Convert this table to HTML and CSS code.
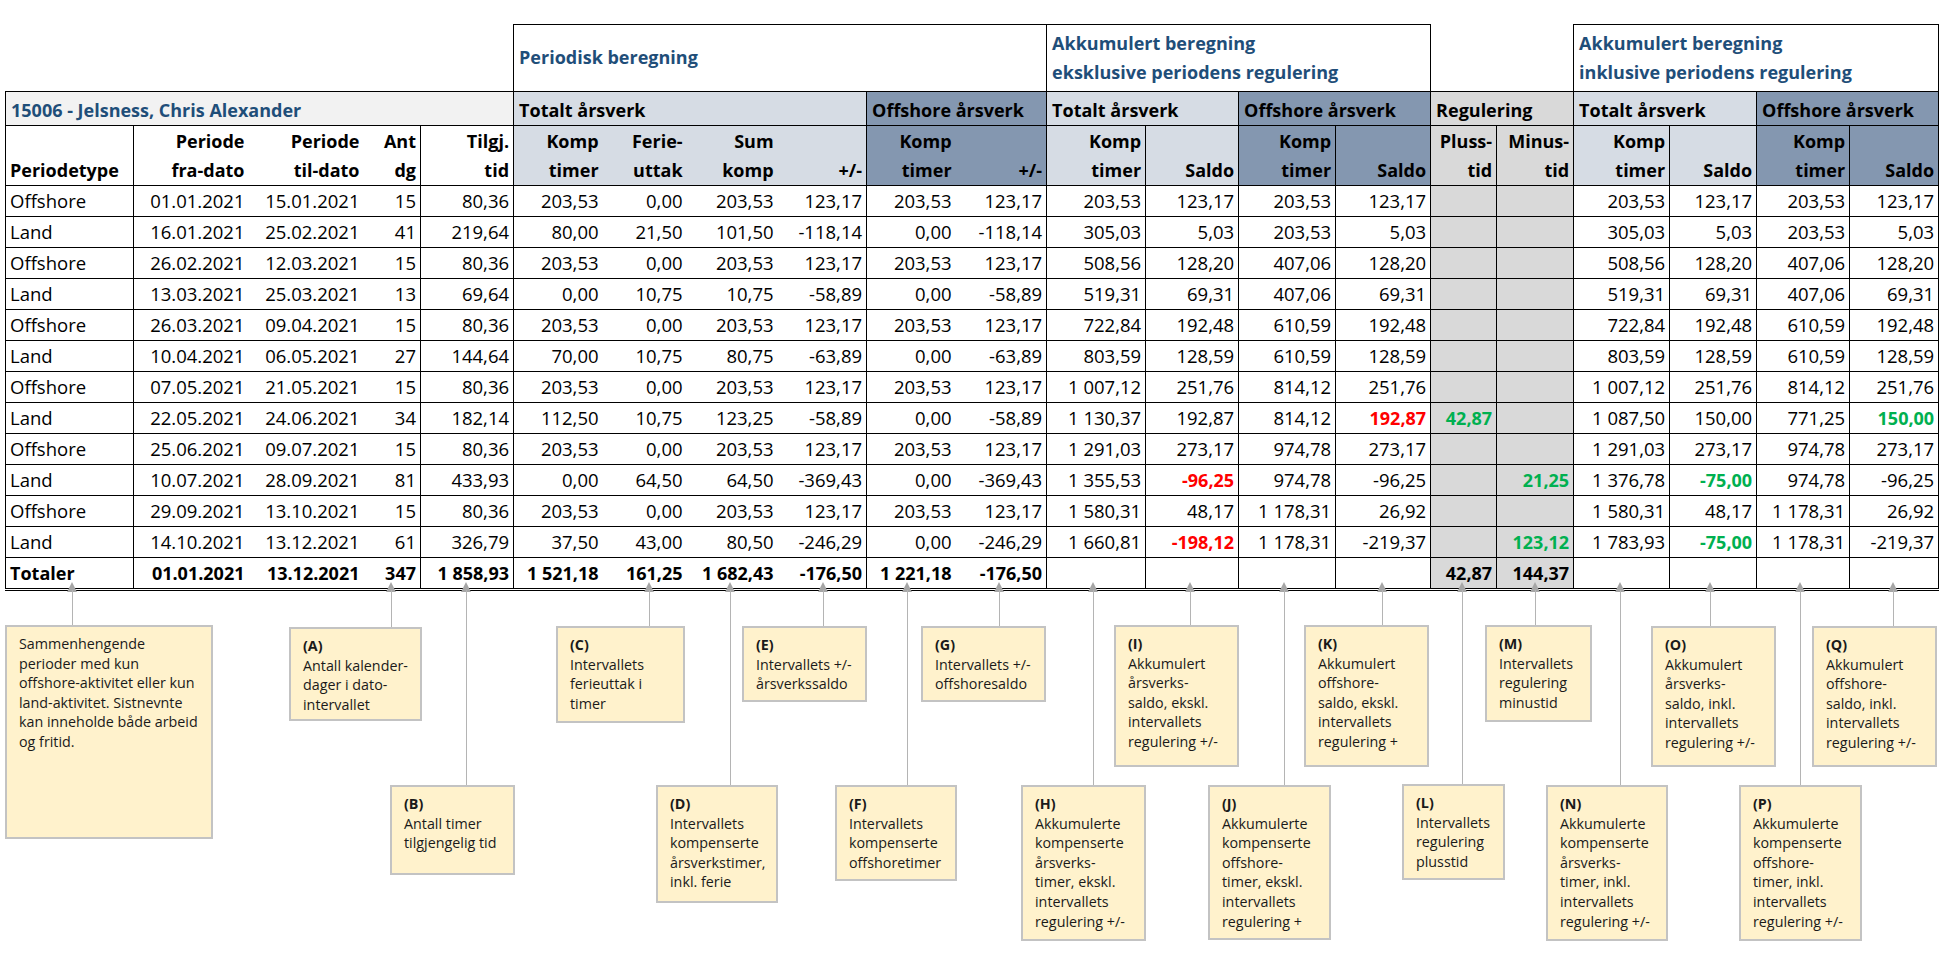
FILE: index.html
```html
<!DOCTYPE html>
<html lang="no">
<head>
<meta charset="utf-8">
<title>Kompensasjonsberegning</title>
<link rel="stylesheet" href="styles.css">
</head>
<body>
<div class="page">
<table class="sheet">
<colgroup>
<col class="w128"><col class="w115"><col class="w115"><col class="w57"><col class="w93">
<col class="w89"><col class="w84"><col class="w91"><col class="w89">
<col class="w89"><col class="w91">
<col class="w99"><col class="w93"><col class="w97"><col class="w95">
<col class="w66"><col class="w77">
<col class="w96"><col class="w87"><col class="w93"><col class="w89">
</colgroup>
<tr class="trow">
<td colspan="5" class="blank"></td>
<td colspan="6" class="title">Periodisk beregning</td>
<td colspan="4" class="title">Akkumulert beregning<br>eksklusive periodens regulering</td>
<td colspan="2" class="blank"></td>
<td colspan="4" class="title">Akkumulert beregning<br>inklusive periodens regulering</td>
</tr>
<tr class="nrow">
<td colspan="5" class="name">15006 - Jelsness, Chris Alexander</td>
<td colspan="4" class="gt">Totalt årsverk</td>
<td colspan="2" class="go">Offshore årsverk</td>
<td colspan="2" class="gt">Totalt årsverk</td>
<td colspan="2" class="go">Offshore årsverk</td>
<td colspan="2" class="gr">Regulering</td>
<td colspan="2" class="gt">Totalt årsverk</td>
<td colspan="2" class="go">Offshore årsverk</td>
</tr>
<tr class="hrow">
<td>Periodetype</td><td>Periode<br>fra-dato</td><td>Periode<br>til-dato</td><td>Ant<br>dg</td><td>Tilgj.<br>tid</td>
<td class="gt">Komp<br>timer</td><td class="gt">Ferie-<br>uttak</td><td class="gt">Sum<br>komp</td><td class="gt">+/-</td>
<td class="go">Komp<br>timer</td><td class="go">+/-</td>
<td class="gt">Komp<br>timer</td><td class="gt">Saldo</td><td class="go">Komp<br>timer</td><td class="go">Saldo</td>
<td class="gr">Pluss-<br>tid</td><td class="gr">Minus-<br>tid</td>
<td class="gt">Komp<br>timer</td><td class="gt">Saldo</td><td class="go">Komp<br>timer</td><td class="go">Saldo</td>
</tr>
<tr class="d"><td>Offshore</td><td>01.01.2021</td><td>15.01.2021</td><td>15</td><td>80,36</td><td>203,53</td><td>0,00</td><td>203,53</td><td>123,17</td><td>203,53</td><td>123,17</td><td>203,53</td><td>123,17</td><td>203,53</td><td>123,17</td><td></td><td></td><td>203,53</td><td>123,17</td><td>203,53</td><td>123,17</td></tr>
<tr class="d"><td>Land</td><td>16.01.2021</td><td>25.02.2021</td><td>41</td><td>219,64</td><td>80,00</td><td>21,50</td><td>101,50</td><td>-118,14</td><td>0,00</td><td>-118,14</td><td>305,03</td><td>5,03</td><td>203,53</td><td>5,03</td><td></td><td></td><td>305,03</td><td>5,03</td><td>203,53</td><td>5,03</td></tr>
<tr class="d"><td>Offshore</td><td>26.02.2021</td><td>12.03.2021</td><td>15</td><td>80,36</td><td>203,53</td><td>0,00</td><td>203,53</td><td>123,17</td><td>203,53</td><td>123,17</td><td>508,56</td><td>128,20</td><td>407,06</td><td>128,20</td><td></td><td></td><td>508,56</td><td>128,20</td><td>407,06</td><td>128,20</td></tr>
<tr class="d"><td>Land</td><td>13.03.2021</td><td>25.03.2021</td><td>13</td><td>69,64</td><td>0,00</td><td>10,75</td><td>10,75</td><td>-58,89</td><td>0,00</td><td>-58,89</td><td>519,31</td><td>69,31</td><td>407,06</td><td>69,31</td><td></td><td></td><td>519,31</td><td>69,31</td><td>407,06</td><td>69,31</td></tr>
<tr class="d"><td>Offshore</td><td>26.03.2021</td><td>09.04.2021</td><td>15</td><td>80,36</td><td>203,53</td><td>0,00</td><td>203,53</td><td>123,17</td><td>203,53</td><td>123,17</td><td>722,84</td><td>192,48</td><td>610,59</td><td>192,48</td><td></td><td></td><td>722,84</td><td>192,48</td><td>610,59</td><td>192,48</td></tr>
<tr class="d"><td>Land</td><td>10.04.2021</td><td>06.05.2021</td><td>27</td><td>144,64</td><td>70,00</td><td>10,75</td><td>80,75</td><td>-63,89</td><td>0,00</td><td>-63,89</td><td>803,59</td><td>128,59</td><td>610,59</td><td>128,59</td><td></td><td></td><td>803,59</td><td>128,59</td><td>610,59</td><td>128,59</td></tr>
<tr class="d"><td>Offshore</td><td>07.05.2021</td><td>21.05.2021</td><td>15</td><td>80,36</td><td>203,53</td><td>0,00</td><td>203,53</td><td>123,17</td><td>203,53</td><td>123,17</td><td>1 007,12</td><td>251,76</td><td>814,12</td><td>251,76</td><td></td><td></td><td>1 007,12</td><td>251,76</td><td>814,12</td><td>251,76</td></tr>
<tr class="d"><td>Land</td><td>22.05.2021</td><td>24.06.2021</td><td>34</td><td>182,14</td><td>112,50</td><td>10,75</td><td>123,25</td><td>-58,89</td><td>0,00</td><td>-58,89</td><td>1 130,37</td><td>192,87</td><td>814,12</td><td class="red">192,87</td><td class="grn">42,87</td><td></td><td>1 087,50</td><td>150,00</td><td>771,25</td><td class="grn">150,00</td></tr>
<tr class="d"><td>Offshore</td><td>25.06.2021</td><td>09.07.2021</td><td>15</td><td>80,36</td><td>203,53</td><td>0,00</td><td>203,53</td><td>123,17</td><td>203,53</td><td>123,17</td><td>1 291,03</td><td>273,17</td><td>974,78</td><td>273,17</td><td></td><td></td><td>1 291,03</td><td>273,17</td><td>974,78</td><td>273,17</td></tr>
<tr class="d"><td>Land</td><td>10.07.2021</td><td>28.09.2021</td><td>81</td><td>433,93</td><td>0,00</td><td>64,50</td><td>64,50</td><td>-369,43</td><td>0,00</td><td>-369,43</td><td>1 355,53</td><td class="red">-96,25</td><td>974,78</td><td>-96,25</td><td></td><td class="grn">21,25</td><td>1 376,78</td><td class="grn">-75,00</td><td>974,78</td><td>-96,25</td></tr>
<tr class="d"><td>Offshore</td><td>29.09.2021</td><td>13.10.2021</td><td>15</td><td>80,36</td><td>203,53</td><td>0,00</td><td>203,53</td><td>123,17</td><td>203,53</td><td>123,17</td><td>1 580,31</td><td>48,17</td><td>1 178,31</td><td>26,92</td><td></td><td></td><td>1 580,31</td><td>48,17</td><td>1 178,31</td><td>26,92</td></tr>
<tr class="d"><td>Land</td><td>14.10.2021</td><td>13.12.2021</td><td>61</td><td>326,79</td><td>37,50</td><td>43,00</td><td>80,50</td><td>-246,29</td><td>0,00</td><td>-246,29</td><td>1 660,81</td><td class="red">-198,12</td><td>1 178,31</td><td>-219,37</td><td></td><td class="grn">123,12</td><td>1 783,93</td><td class="grn">-75,00</td><td>1 178,31</td><td>-219,37</td></tr>
<tr class="d tot"><td>Totaler</td><td>01.01.2021</td><td>13.12.2021</td><td>347</td><td>1 858,93</td><td>1 521,18</td><td>161,25</td><td>1 682,43</td><td>-176,50</td><td>1 221,18</td><td>-176,50</td><td></td><td></td><td></td><td></td><td>42,87</td><td>144,37</td><td></td><td></td><td></td><td></td></tr>
</table>

<div class="arrow a-s"></div>
<div class="arrow a-a"></div>
<div class="arrow a-b"></div>
<div class="arrow a-c"></div>
<div class="arrow a-d"></div>
<div class="arrow a-e"></div>
<div class="arrow a-f"></div>
<div class="arrow a-g"></div>
<div class="arrow a-h"></div>
<div class="arrow a-i"></div>
<div class="arrow a-j"></div>
<div class="arrow a-k"></div>
<div class="arrow a-l"></div>
<div class="arrow a-m"></div>
<div class="arrow a-n"></div>
<div class="arrow a-o"></div>
<div class="arrow a-p"></div>
<div class="arrow a-q"></div>

<div class="note n-s">Sammenhengende<br>perioder med kun<br>offshore-aktivitet eller kun<br>land-aktivitet. Sistnevnte<br>kan inneholde både arbeid<br>og fritid.</div>
<div class="note n-a"><b>(A)</b><br>Antall kalender-<br>dager i dato-<br>intervallet</div>
<div class="note n-b"><b>(B)</b><br>Antall timer<br>tilgjengelig tid</div>
<div class="note n-c"><b>(C)</b><br>Intervallets<br>ferieuttak i<br>timer</div>
<div class="note n-d"><b>(D)</b><br>Intervallets<br>kompenserte<br>årsverkstimer,<br>inkl. ferie</div>
<div class="note n-e"><b>(E)</b><br>Intervallets +/-<br>årsverkssaldo</div>
<div class="note n-f"><b>(F)</b><br>Intervallets<br>kompenserte<br>offshoretimer</div>
<div class="note n-g"><b>(G)</b><br>Intervallets +/-<br>offshoresaldo</div>
<div class="note n-h"><b>(H)</b><br>Akkumulerte<br>kompenserte<br>årsverks-<br>timer, ekskl.<br>intervallets<br>regulering +/-</div>
<div class="note n-i"><b>(I)</b><br>Akkumulert<br>årsverks-<br>saldo, ekskl.<br>intervallets<br>regulering +/-</div>
<div class="note n-j"><b>(J)</b><br>Akkumulerte<br>kompenserte<br>offshore-<br>timer, ekskl.<br>intervallets<br>regulering +</div>
<div class="note n-k"><b>(K)</b><br>Akkumulert<br>offshore-<br>saldo, ekskl.<br>intervallets<br>regulering +</div>
<div class="note n-l"><b>(L)</b><br>Intervallets<br>regulering<br>plusstid</div>
<div class="note n-m"><b>(M)</b><br>Intervallets<br>regulering<br>minustid</div>
<div class="note n-n"><b>(N)</b><br>Akkumulerte<br>kompenserte<br>årsverks-<br>timer, inkl.<br>intervallets<br>regulering +/-</div>
<div class="note n-o"><b>(O)</b><br>Akkumulert<br>årsverks-<br>saldo, inkl.<br>intervallets<br>regulering +/-</div>
<div class="note n-p"><b>(P)</b><br>Akkumulerte<br>kompenserte<br>offshore-<br>timer, inkl.<br>intervallets<br>regulering +/-</div>
<div class="note n-q"><b>(Q)</b><br>Akkumulert<br>offshore-<br>saldo, inkl.<br>intervallets<br>regulering +/-</div>
</div>
</body>
</html>
```

FILE: styles.css
```css
* { box-sizing: border-box; }
body {
  margin: 0;
  background: #fff;
  color: #000;
  font-family: "Open Sans", "Liberation Sans", sans-serif;
}
.page {
  position: relative;
  width: 1953px;
  height: 958px;
  padding: 24px 0 0 5px;
  overflow: hidden;
}

/* ---------- sheet ---------- */
.sheet {
  border-collapse: collapse;
  table-layout: fixed;
  width: 1933px;
  font-size: 18.5px;
}
.w128 { width: 128px; } .w115 { width: 115px; } .w57 { width: 57px; }
.w93 { width: 93px; } .w89 { width: 89px; } .w84 { width: 84px; }
.w91 { width: 91px; } .w99 { width: 99px; } .w97 { width: 97px; }
.w95 { width: 95px; } .w66 { width: 66px; } .w77 { width: 77px; }
.w96 { width: 96px; } .w87 { width: 87px; }

.sheet td {
  padding: 0 4px;
  white-space: nowrap;
  text-align: right;
  overflow: hidden;
}

/* title row */
.trow td { height: 67px; }
.trow .blank { border: none; }
.trow .title {
  border: 1px solid #000;
  color: #1f4e79;
  font-weight: 700;
  font-size: 18px;
  text-align: left;
  padding-left: 5px;
  line-height: 29.4px;
  vertical-align: middle;
}

/* name / group row */
.nrow td {
  height: 34px;
  border: 1px solid #000;
  font-weight: 700;
  font-size: 18px;
  text-align: left;
  padding: 2px 4px 0 5px;
  vertical-align: middle;
}
.nrow .name { background: #f2f2f2; color: #1f4e79; }

.gt { background: #d6dce4; }
.go { background: #8497b0; }
.gr { background: #d9d9d9; }

/* column header row */
.hrow td {
  height: 60px;
  font-weight: 700;
  font-size: 18px;
  line-height: 29px;
  vertical-align: bottom;
  padding-bottom: 0;
  border-bottom: 1px solid #000;
}
.hrow td:nth-child(1) { text-align: left; }

/* group separators (header + data) */
.hrow td:nth-child(1), .d td:nth-child(1) { border-left: 1px solid #000; }
.hrow td:nth-child(1), .d td:nth-child(1),
.hrow td:nth-child(4), .d td:nth-child(4),
.hrow td:nth-child(n+5), .d td:nth-child(n+5) { border-right: 1px solid #000; }
.hrow td:nth-child(6), .d td:nth-child(6),
.hrow td:nth-child(7), .d td:nth-child(7),
.hrow td:nth-child(8), .d td:nth-child(8),
.hrow td:nth-child(10), .d td:nth-child(10) { border-right: none; }

/* data rows */
.d td {
  height: 30px;
  line-height: 30px;
  vertical-align: middle;
  border-bottom: 1px solid #000;
}
.d td:nth-child(1) { text-align: left; }
.d td:nth-child(16), .d td:nth-child(17) { background: #d9d9d9; }

.red { color: #ff0000; font-weight: 700; font-size: 18px; }
.grn { color: #00b050; font-weight: 700; font-size: 18px; }

.tot td {
  font-weight: 700;
  font-size: 18px;
  border-bottom: 3px double #000;
}

/* ---------- callouts ---------- */
.arrow {
  position: absolute;
  top: 582px;
  width: 10px;
}
.arrow::before {
  content: "";
  position: absolute;
  left: 0;
  top: 0;
  border-left: 5px solid transparent;
  border-right: 5px solid transparent;
  border-bottom: 10px solid #a6a6a6;
}
.arrow::after {
  content: "";
  position: absolute;
  left: 4.5px;
  top: 8px;
  bottom: 0;
  width: 1px;
  background: #b4b4b4;
}
.a-s { left: 67px;   height: 43px; }
.a-a { left: 386px;  height: 45px; }
.a-b { left: 461px;  height: 203px; }
.a-c { left: 644px;  height: 44px; }
.a-d { left: 725px;  height: 203px; }
.a-e { left: 818px;  height: 44px; }
.a-f { left: 902px;  height: 203px; }
.a-g { left: 994px;  height: 44px; }
.a-h { left: 1088px; height: 203px; }
.a-i { left: 1185px; height: 43px; }
.a-j { left: 1279px; height: 203px; }
.a-k { left: 1377px; height: 43px; }
.a-l { left: 1457px; height: 202px; }
.a-m { left: 1530px; height: 43px; }
.a-n { left: 1615px; height: 203px; }
.a-o { left: 1705px; height: 44px; }
.a-p { left: 1795px; height: 203px; }
.a-q { left: 1888px; height: 44px; }

.note {
  position: absolute;
  background: #fff2cc;
  border: 2px solid #c3c3c3;
  padding: 7px 4px 0 12px;
  font-size: 14.3px;
  line-height: 19.6px;
  color: #1a1a1a;
  white-space: nowrap;
}
.note b { font-weight: 700; }
.n-s { left: 5px;    top: 625px; width: 208px; height: 214px; }
.n-a { left: 289px;  top: 627px; width: 133px; height: 94px; }
.n-b { left: 390px;  top: 785px; width: 125px; height: 90px; }
.n-c { left: 556px;  top: 626px; width: 129px; height: 97px; }
.n-d { left: 656px;  top: 785px; width: 122px; height: 118px; }
.n-e { left: 742px;  top: 626px; width: 125px; height: 76px; }
.n-f { left: 835px;  top: 785px; width: 122px; height: 96px; }
.n-g { left: 921px;  top: 626px; width: 125px; height: 76px; }
.n-h { left: 1021px; top: 785px; width: 125px; height: 156px; }
.n-i { left: 1114px; top: 625px; width: 125px; height: 142px; }
.n-j { left: 1208px; top: 785px; width: 123px; height: 155px; }
.n-k { left: 1304px; top: 625px; width: 125px; height: 142px; }
.n-l { left: 1402px; top: 784px; width: 103px; height: 96px; }
.n-m { left: 1485px; top: 625px; width: 107px; height: 97px; }
.n-n { left: 1546px; top: 785px; width: 122px; height: 156px; }
.n-o { left: 1651px; top: 626px; width: 125px; height: 141px; }
.n-p { left: 1739px; top: 785px; width: 123px; height: 156px; }
.n-q { left: 1812px; top: 626px; width: 125px; height: 141px; }
```
